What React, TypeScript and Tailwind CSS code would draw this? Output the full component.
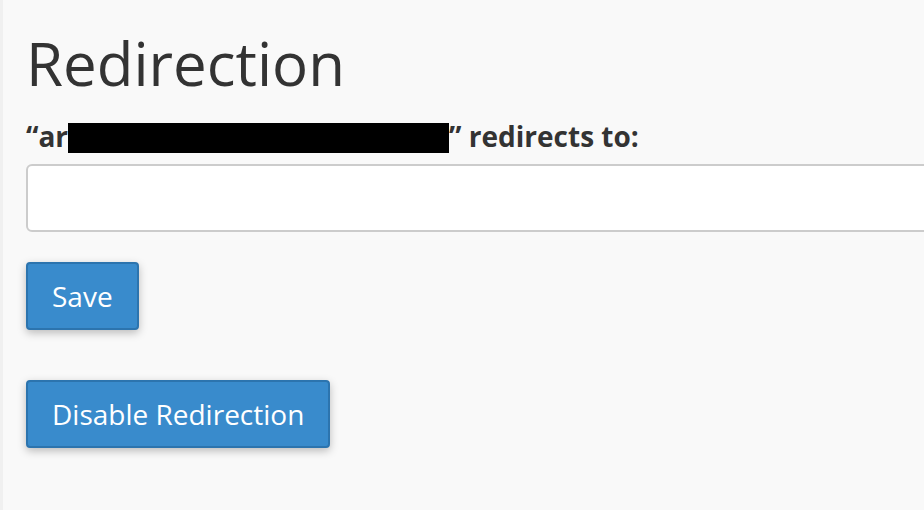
import React from "react";

export default function App() {
  return (
    <div
      className="w-[924px] h-[510px] bg-[#f9f9f9] overflow-hidden border-l-[3px] border-[#f0f0f0] text-[#333]"
      style={{ fontFamily: '"Open Sans", sans-serif' }}
    >
      <div className="pl-[23px] pt-[23px] flex flex-col">
        <h1 className="text-[60px] leading-[80px] font-normal">Redirection</h1>
        <div className="mt-[17px] flex items-start text-[28px] font-bold leading-[32px] h-[32px]">
          <span>“ar</span>
          <span className="inline-block mt-[3px] w-[381px] h-[30px] bg-black" />
          <span>” redirects to:</span>
        </div>
        <input
          type="text"
          className="mt-[12px] w-[920px] h-[68px] bg-white border-2 border-[#ccc] rounded-[6px] outline-none"
        />
        <div className="mt-[30px]">
          <button className="h-[68px] px-[24px] bg-[#398bcc] border-2 border-[#2c74ae] rounded-[4px] text-white text-[28px] shadow-[0_3px_8px_rgba(0,0,0,0.25)]">
            Save
          </button>
        </div>
        <div className="mt-[50px]">
          <button className="h-[68px] px-[24px] bg-[#398bcc] border-2 border-[#2c74ae] rounded-[4px] text-white text-[28px] shadow-[0_3px_8px_rgba(0,0,0,0.25)]">
            Disable Redirection
          </button>
        </div>
      </div>
    </div>
  );
}
